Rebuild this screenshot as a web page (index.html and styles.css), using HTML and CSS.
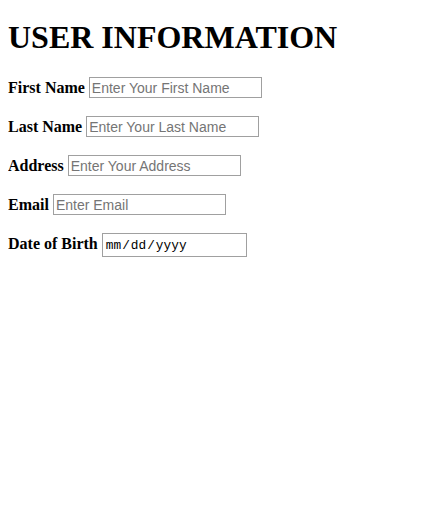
FILE: index.html
```html
<!DOCTYPE html>
<html>
<head>
<meta charset="utf-8">
<title>User Information</title>
<link rel="stylesheet" href="styles.css">
</head>
<body class="page">
<h1 class="title">USER INFORMATION</h1>
<form class="form">
<label class="label" for="fname">First Name</label> <input class="field" id="fname" type="text" placeholder="Enter Your First Name"><br><br>
<label class="label" for="lname">Last Name</label> <input class="field" id="lname" type="text" placeholder="Enter Your Last Name"><br><br>
<label class="label" for="addr">Address</label> <input class="field" id="addr" type="text" placeholder="Enter Your Address"><br><br>
<label class="label" for="email">Email</label> <input class="field" id="email" type="email" placeholder="Enter Email"><br><br>
<label class="label" for="dob">Date of Birth</label> <input class="field date" id="dob" type="date">
</form>
</body>
</html>
```
FILE: styles.css
```css
.page {
  font-family: "Liberation Serif", "Times New Roman", serif;
  margin: 8px;
  background: #fff;
  color: #000;
}
.title {
  font-size: 32px;
  font-weight: bold;
  margin: 11px 0 21.44px;
}
.label {
  font-weight: bold;
  font-size: 16px;
}
.field {
  font-family: "Liberation Sans", Arial, sans-serif;
  font-size: 14px;
  box-sizing: border-box;
  width: 173px;
  height: 21px;
  border: 1px solid #a0a0a0;
  padding: 1px 2px;
  background: #fff;
  color: #000;
}
.field::placeholder {
  color: #757575;
}
.date {
  font-family: "Liberation Mono", "Courier New", monospace;
  font-size: 12.8px;
  width: 145px;
  height: 24px;
}
.date::-webkit-calendar-picker-indicator {
  display: none;
}
```
